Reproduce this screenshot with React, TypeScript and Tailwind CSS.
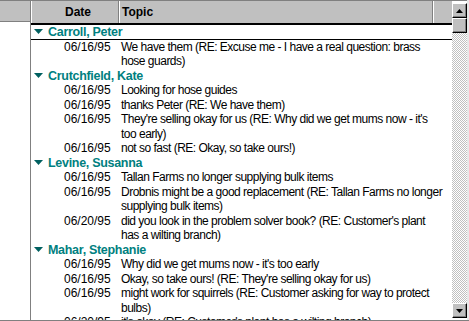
import React from 'react';

type Entry = { date: string; lines: string[] };
type Group = { name: string; entries: Entry[] };

const groups: Group[] = [
  {
    name: 'Carroll, Peter',
    entries: [
      { date: '06/16/95', lines: ['We have them (RE: Excuse me - I have a real question: brass', 'hose guards)'] },
    ],
  },
  {
    name: 'Crutchfield, Kate',
    entries: [
      { date: '06/16/95', lines: ['Looking for hose guides'] },
      { date: '06/16/95', lines: ['thanks Peter (RE: We have them)'] },
      { date: '06/16/95', lines: ["They're selling okay for us (RE: Why did we get mums now - it's", 'too early)'] },
      { date: '06/16/95', lines: ['not so fast (RE: Okay, so take ours!)'] },
    ],
  },
  {
    name: 'Levine, Susanna',
    entries: [
      { date: '06/16/95', lines: ['Tallan Farms no longer supplying bulk items'] },
      { date: '06/16/95', lines: ['Drobnis might be a good replacement (RE: Tallan Farms no longer', 'supplying bulk items)'] },
      { date: '06/20/95', lines: ["did you look in the problem solver book? (RE: Customer's plant", 'has a wilting branch)'] },
    ],
  },
  {
    name: 'Mahar, Stephanie',
    entries: [
      { date: '06/16/95', lines: ["Why did we get mums now - it's too early"] },
      { date: '06/16/95', lines: ["Okay, so take ours! (RE: They're selling okay for us)"] },
      { date: '06/16/95', lines: ['might work for squirrels (RE: Customer asking for way to protect', 'bulbs)'] },
      { date: '06/20/95', lines: ["it's okay (RE: Customer's plant has a wilting branch)"] },
    ],
  },
];

function Caret() {
  return (
    <svg width="10" height="5" viewBox="0 0 10 5" className="shrink-0">
      <polygon points="0,0 9,0 4.5,5" fill="#006060" />
    </svg>
  );
}

function ScrollButton({ up }: { up?: boolean }) {
  return (
    <div className="h-[15px] w-[15px] bg-[#c0c0c0] border-t border-l border-t-white border-l-white border-r border-b border-r-black border-b-black flex items-center justify-center shadow-[inset_-1px_-1px_0_#808080]">
      <svg width="7" height="4" viewBox="0 0 7 4">
        <polygon points={up ? '3.5,0 7,4 0,4' : '0,0 7,0 3.5,4'} fill="#000" />
      </svg>
    </div>
  );
}

export default function App() {
  return (
    <div className="w-[469px] h-[321px] bg-white flex overflow-hidden font-['Liberation_Sans',Arial,sans-serif] text-[12px] text-black">
      {/* Record selector column */}
      <div className="w-[31px] shrink-0 flex flex-col border-r border-[#808080] border-b">
        <div className="h-[22px] bg-[#c0c0c0] border-t border-b border-[#808080]" />
        <div className="flex-1" />
      </div>

      {/* Grid */}
      <div className="w-[421px] shrink-0 flex flex-col border-b border-[#808080]">
        <div className="h-[25px] shrink-0 flex bg-[#c0c0c0] border-t border-t-[#808080] border-b-2 border-b-black font-bold">
          <div className="w-[88px] border-l border-l-white border-r border-r-[#808080] pl-[33px] leading-[22px]">Date</div>
          <div className="w-[314px] border-l border-l-white border-r border-r-[#808080] pl-[2px] leading-[22px]">Topic</div>
          <div className="flex-1 border-l border-l-white" />
        </div>
        <div className="flex-1 overflow-hidden">
          {groups.map((g, gi) => (
            <div key={g.name}>
              <div
                className={`flex items-center gap-[4px] pl-[3px] h-[14.5px] text-[#008080] font-bold text-[12.5px] tracking-[-0.3px] ${
                  gi === 0 ? 'border-b border-black' : ''
                }`}
              >
                <Caret />
                <span className="leading-[14.5px] whitespace-nowrap">{g.name}</span>
              </div>
              {g.entries.map((e, ei) => (
                <div key={ei} className="flex">
                  <div className="w-[88px] shrink-0 pl-[33px] leading-[14.5px]">{e.date}</div>
                  <div className="pl-[2px] tracking-[-0.5px]">
                    {e.lines.map((l, li) => (
                      <div key={li} className="leading-[14.5px] whitespace-nowrap">
                        {l}
                      </div>
                    ))}
                  </div>
                </div>
              ))}
            </div>
          ))}
        </div>
      </div>

      {/* Vertical scrollbar */}
      <div className="w-[15px] shrink-0 flex flex-col border-t border-t-[#808080] pt-[2px] pb-[2px] border-b border-b-[#808080]">
        <ScrollButton up />
        <div className="h-[15px] w-[15px] bg-[#c0c0c0] border-t border-l border-t-white border-l-white border-r border-b border-r-black border-b-black shadow-[inset_-1px_-1px_0_#808080]" />
        <div className="flex-1 bg-[repeating-conic-gradient(#c0c0c0_0_25%,#ffffff_0_50%)] bg-[length:2px_2px]" />
        <ScrollButton />
      </div>
      <div className="flex-1 bg-[#e8e8e8] border-b border-[#808080]" />
    </div>
  );
}
